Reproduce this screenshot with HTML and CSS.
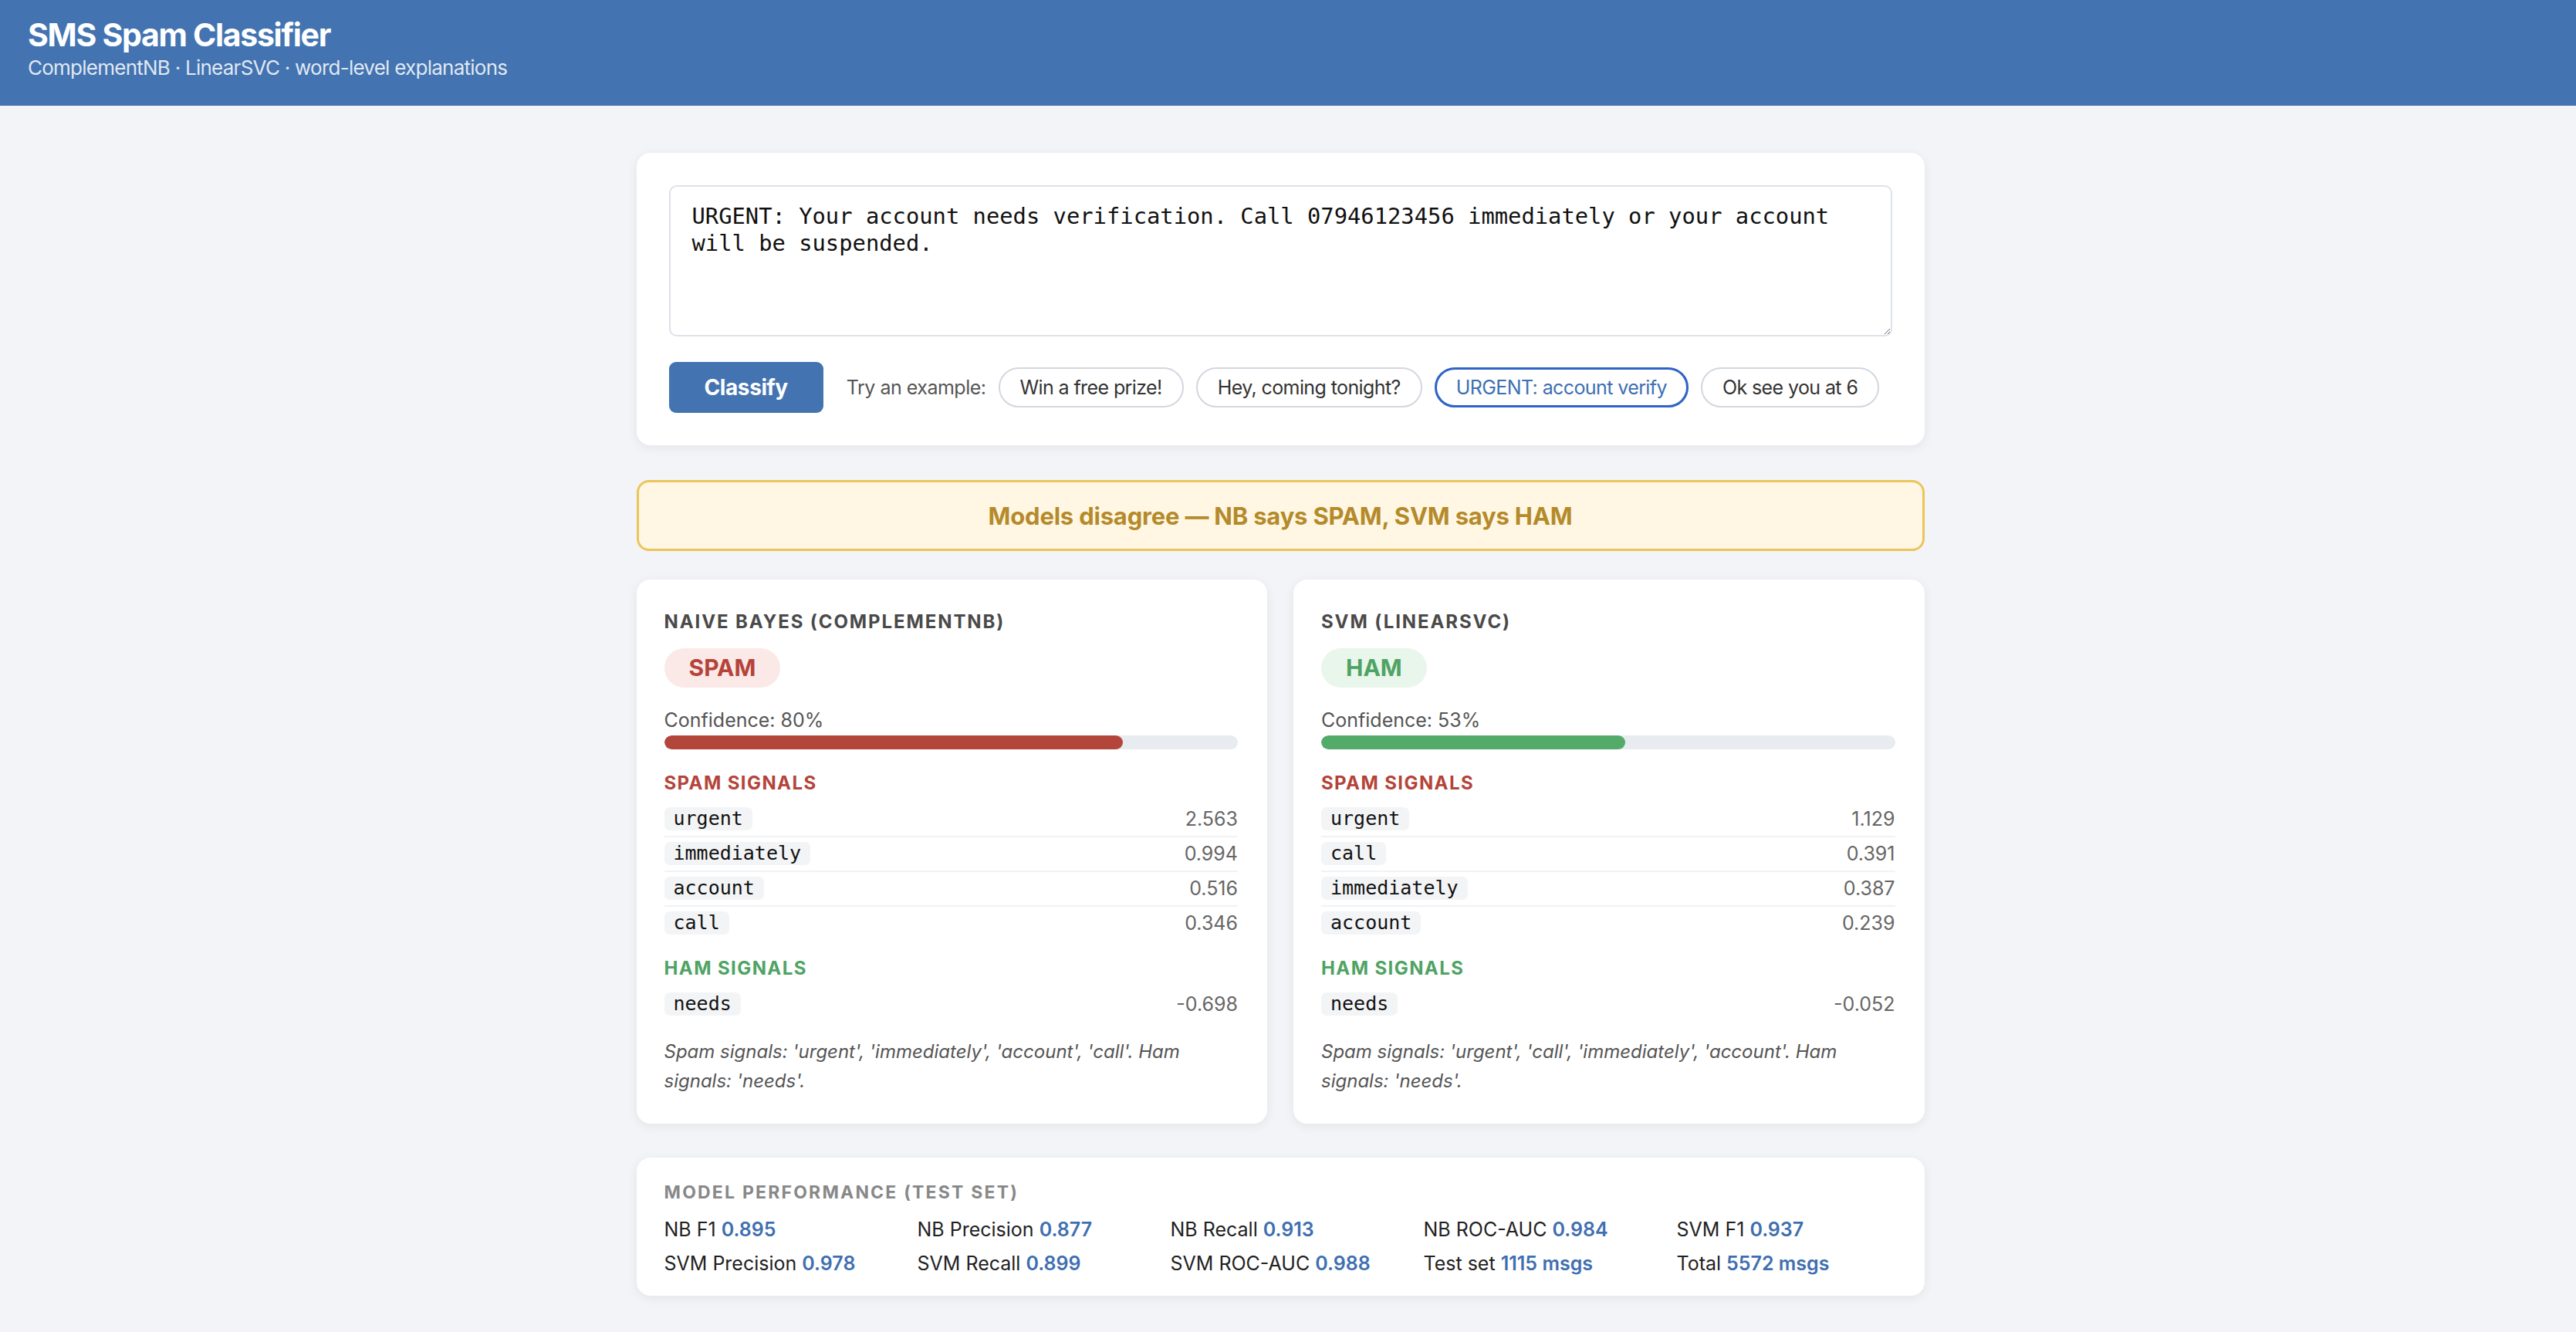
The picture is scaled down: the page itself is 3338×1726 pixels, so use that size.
FILE: index.html
```html
<!DOCTYPE html>
<html lang="en">
  <head>
    <meta charset="UTF-8" />
    <meta name="viewport" content="width=device-width, initial-scale=1.0" />
    <title>SMS Spam Classifier</title>
    <link rel="stylesheet" href="styles.css">
  </head>
  <body>
    <header class="topbar">
      <h1>SMS Spam Classifier</h1>
      <p class="subtitle">ComplementNB · LinearSVC · word-level explanations</p>
    </header>

    <main class="container">
      <section class="card input-card">
        <textarea class="msg-input" spellcheck="false">URGENT: Your account needs verification. Call 07946123456 immediately or your account will be suspended.</textarea>
        <div class="actions">
          <button class="classify-btn">Classify</button>
          <span class="try-label">Try an example:</span>
          <button class="chip">Win a free prize!</button>
          <button class="chip">Hey, coming tonight?</button>
          <button class="chip active">URGENT: account verify</button>
          <button class="chip">Ok see you at 6</button>
        </div>
      </section>

      <div class="verdict-banner">Models disagree — NB says SPAM, SVM says HAM</div>

      <div class="model-grid">
        <section class="card model-card">
          <h2 class="model-title">Naive Bayes (ComplementNB)</h2>
          <span class="label-pill spam">SPAM</span>
          <div class="confidence">Confidence: 80%</div>
          <div class="bar"><div class="bar-fill spam" style="width: 80%"></div></div>

          <h3 class="signals-title spam">Spam signals</h3>
          <ul class="signal-list">
            <li><code>urgent</code><span>2.563</span></li>
            <li><code>immediately</code><span>0.994</span></li>
            <li><code>account</code><span>0.516</span></li>
            <li><code>call</code><span>0.346</span></li>
          </ul>

          <h3 class="signals-title ham">Ham signals</h3>
          <ul class="signal-list">
            <li><code>needs</code><span>-0.698</span></li>
          </ul>

          <p class="summary">Spam signals: 'urgent', 'immediately', 'account', 'call'. Ham signals: 'needs'.</p>
        </section>

        <section class="card model-card">
          <h2 class="model-title">SVM (LinearSVC)</h2>
          <span class="label-pill ham">HAM</span>
          <div class="confidence">Confidence: 53%</div>
          <div class="bar"><div class="bar-fill ham" style="width: 53%"></div></div>

          <h3 class="signals-title spam">Spam signals</h3>
          <ul class="signal-list">
            <li><code>urgent</code><span>1.129</span></li>
            <li><code>call</code><span>0.391</span></li>
            <li><code>immediately</code><span>0.387</span></li>
            <li><code>account</code><span>0.239</span></li>
          </ul>

          <h3 class="signals-title ham">Ham signals</h3>
          <ul class="signal-list">
            <li><code>needs</code><span>-0.052</span></li>
          </ul>

          <p class="summary">Spam signals: 'urgent', 'call', 'immediately', 'account'. Ham signals: 'needs'.</p>
        </section>
      </div>

      <section class="card perf-card">
        <h2 class="perf-title">Model performance (test set)</h2>
        <div class="perf-grid">
          <div>NB F1 <b>0.895</b></div>
          <div>NB Precision <b>0.877</b></div>
          <div>NB Recall <b>0.913</b></div>
          <div>NB ROC-AUC <b>0.984</b></div>
          <div>SVM F1 <b>0.937</b></div>
          <div>SVM Precision <b>0.978</b></div>
          <div>SVM Recall <b>0.899</b></div>
          <div>SVM ROC-AUC <b>0.988</b></div>
          <div>Test set <b>1115 msgs</b></div>
          <div>Total <b>5572 msgs</b></div>
        </div>
      </section>
    </main>
  </body>
</html>
```

FILE: styles.css
```css
* {
  margin: 0;
  padding: 0;
  box-sizing: border-box;
}

body {
  font-family: Inter, "Liberation Sans", sans-serif;
  background: #f3f4f7;
  color: #222;
}

/* Header bar */
.topbar {
  background: #4374b1;
  color: #fff;
  height: 137px;
  padding: 20px 36px 0;
}

.topbar h1 {
  font-size: 41px;
  font-weight: 700;
  line-height: 50px;
  letter-spacing: -1.3px;
}

.subtitle {
  font-size: 26px;
  line-height: 36px;
  letter-spacing: -0.75px;
  color: rgba(255, 255, 255, 0.85);
}

.container {
  width: 1669px;
  margin: 0 auto;
  padding: 61px 0 40px;
  position: relative;
  left: -10px;
}

.card {
  background: #fff;
  border-radius: 18px;
  box-shadow: 0 3px 14px rgba(20, 30, 60, 0.07);
}

/* Input */
.input-card {
  padding: 42px;
}

.msg-input {
  display: block;
  width: 100%;
  height: 196px;
  border: 2px solid #dde1e8;
  border-radius: 10px;
  padding: 21px 28px;
  font-family: "DejaVu Sans Mono", "Liberation Mono", monospace;
  font-size: 28.8px;
  line-height: 35px;
  color: #111;
  resize: vertical;
  outline: none;
}

.actions {
  display: flex;
  align-items: center;
  margin-top: 33px;
  gap: 16px;
  white-space: nowrap;
}

.classify-btn {
  flex-shrink: 0;
  background: #4374b1;
  color: #fff;
  border: none;
  border-radius: 9px;
  height: 66px;
  padding: 0 46px;
  font-family: inherit;
  font-size: 28px;
  font-weight: 700;
  letter-spacing: -0.4px;
  margin-right: 14px;
}

.try-label {
  font-size: 25px;
  letter-spacing: -0.5px;
  color: #555;
}

.chip {
  flex-shrink: 0;
  height: 52px;
  padding: 0 26px;
  background: #fff;
  border: 2px solid #d3d7de;
  border-radius: 26px;
  font-family: inherit;
  font-size: 25px;
  letter-spacing: -0.6px;
  color: #333;
}

.chip.active {
  border: 3px solid #2f63c6;
  padding: 0 25px;
  color: #3d6fb3;
}

/* Disagreement banner */
.verdict-banner {
  margin-top: 45px;
  height: 92px;
  display: flex;
  align-items: center;
  justify-content: center;
  background: #fff7e3;
  border: 3px solid #ebc45c;
  border-radius: 16px;
  color: #b58a2b;
  font-size: 31px;
  font-weight: 700;
  letter-spacing: -0.2px;
}

/* Model cards */
.model-grid {
  display: grid;
  grid-template-columns: 1fr 1fr;
  gap: 34px;
  margin-top: 37px;
}

.model-card {
  padding: 40px 38px 36px 36px;
}

.model-title {
  font-size: 24px;
  font-weight: 700;
  letter-spacing: 1.9px;
  text-transform: uppercase;
  color: #4a4a4a;
  line-height: 30px;
}

.label-pill {
  display: inline-block;
  margin-top: 19px;
  height: 51px;
  line-height: 51px;
  padding: 0 32px;
  border-radius: 26px;
  font-size: 30px;
  font-weight: 700;
}

.label-pill.spam {
  background: #fbe9e8;
  color: #b4443a;
}

.label-pill.ham {
  background: #e9f6ec;
  color: #4fa363;
}

.confidence {
  margin-top: 27px;
  font-size: 25px;
  line-height: 30px;
  color: #555;
}

.bar {
  margin-top: 5px;
  height: 18px;
  border-radius: 9px;
  background: #e8ebef;
  overflow: hidden;
}

.bar-fill {
  height: 100%;
  border-radius: 9px;
}

.bar-fill.spam {
  background: #b4453a;
}

.bar-fill.ham {
  background: #53ab69;
}

.signals-title {
  margin-top: 29px;
  font-size: 24px;
  font-weight: 700;
  letter-spacing: 1.4px;
  text-transform: uppercase;
  line-height: 30px;
}

.signals-title.spam {
  color: #b4443a;
}

.signals-title.ham {
  color: #4fa363;
  margin-top: 22px;
}

.signal-list {
  list-style: none;
  margin-top: 10px;
}

.signal-list li {
  display: flex;
  justify-content: space-between;
  align-items: center;
  padding: 6px 0 7px;
  border-bottom: 2px solid #f1f2f4;
  font-size: 25px;
  color: #666;
}

.signal-list li:last-child {
  border-bottom: none;
}

.signal-list code {
  font-family: "DejaVu Sans Mono", "Liberation Mono", monospace;
  font-size: 25px;
  line-height: 30px;
  color: #111;
  background: #f3f4f6;
  border-radius: 7px;
  padding: 0 12px;
}

.summary {
  margin-top: 21px;
  font-size: 24px;
  font-style: italic;
  line-height: 38px;
  color: #555;
}

/* Performance */
.perf-card {
  margin-top: 44px;
  padding: 30px 36px 20px;
}

.perf-title {
  font-size: 23px;
  font-weight: 700;
  letter-spacing: 2.2px;
  text-transform: uppercase;
  color: #888;
  line-height: 30px;
}

.perf-grid {
  display: grid;
  grid-template-columns: repeat(5, 1fr);
  column-gap: 43px;
  margin-top: 11px;
  font-size: 25px;
  line-height: 44px;
  color: #222;
}

.perf-grid b {
  font-weight: 600;
  color: #3f6fb0;
}
```
